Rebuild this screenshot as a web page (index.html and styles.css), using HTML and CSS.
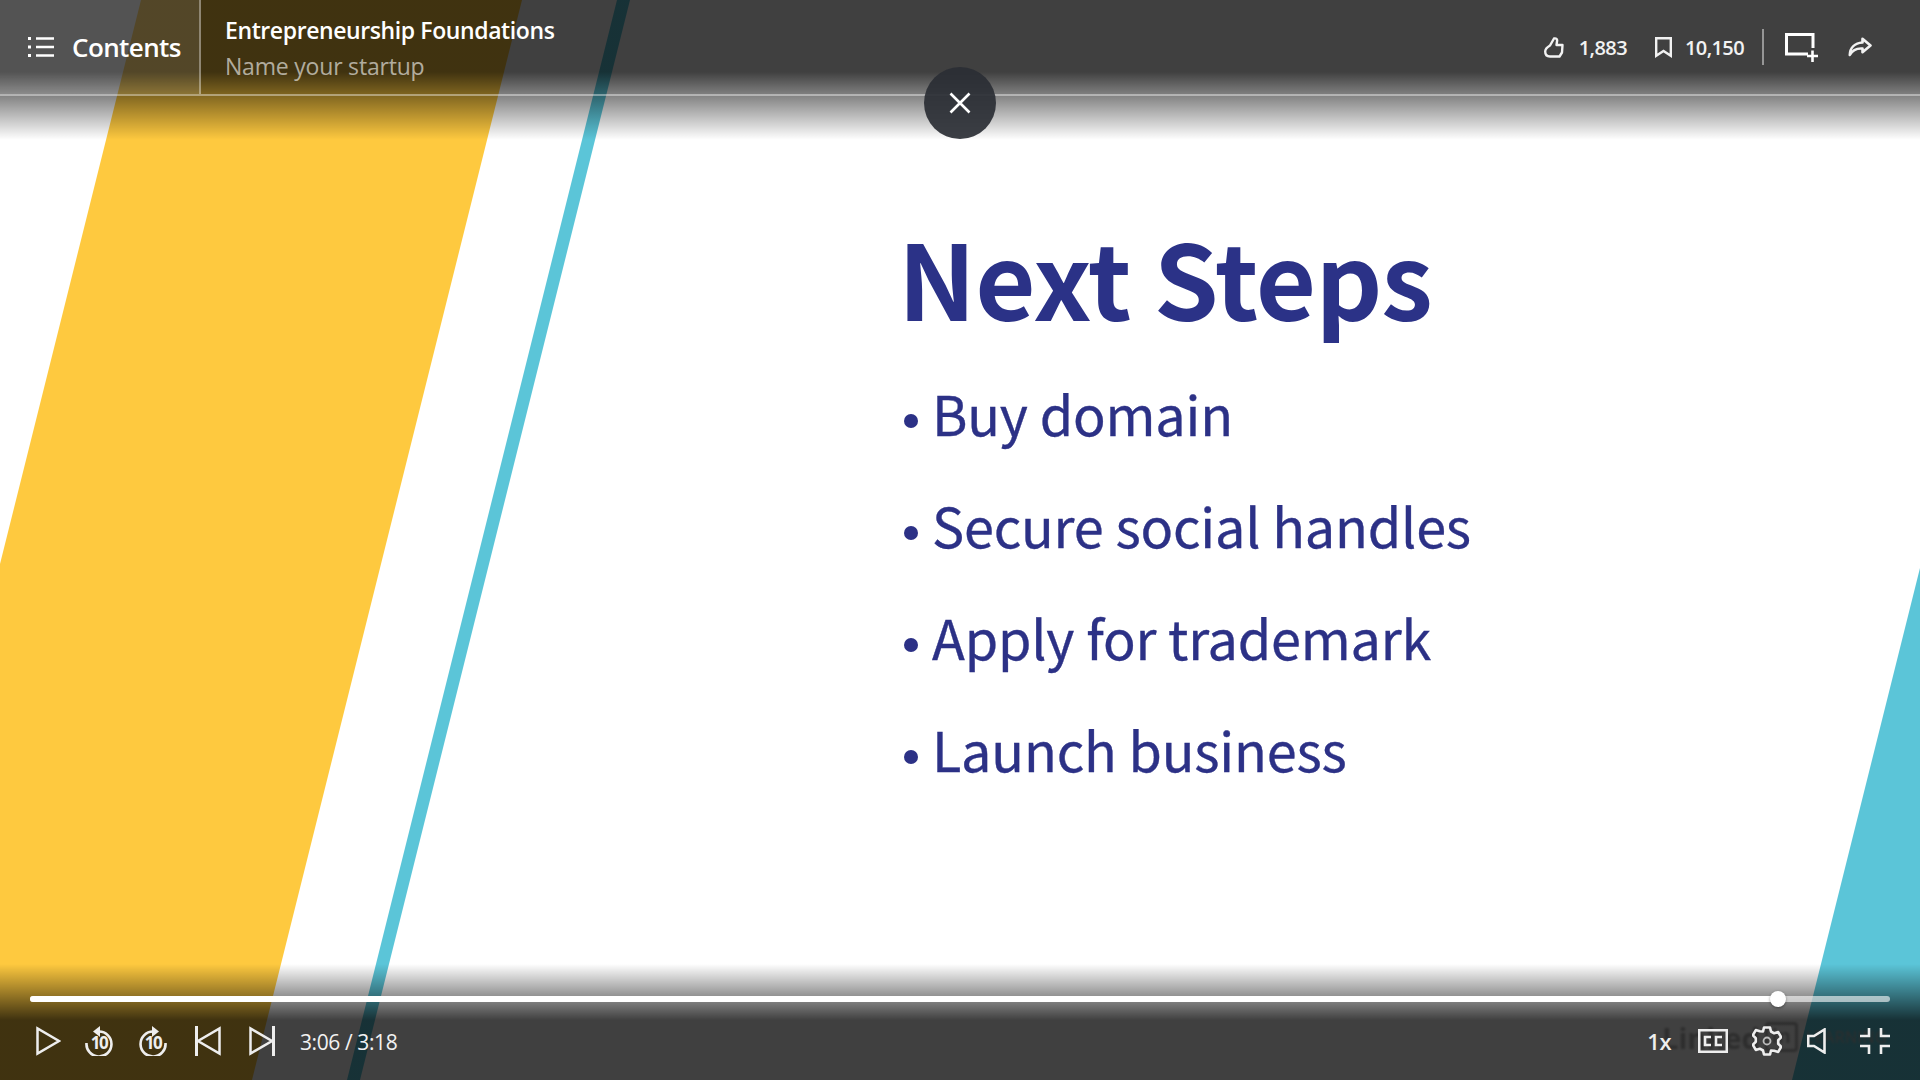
FILE: index.html
```html
<!DOCTYPE html>
<html lang="en">
<head>
<meta charset="utf-8">
<title>Entrepreneurship Foundations - Name your startup</title>
<link rel="stylesheet" href="styles.css">
</head>
<body>
<main class="player">
  <svg class="slide-art" viewBox="0 0 1920 1080" aria-hidden="true">
    <polygon class="art-yellow" points="141,0 522,0 252,1080 -129,1080"/>
    <polygon class="art-blue" points="617,0 630,0 360,1080 347,1080"/>
    <polygon class="art-blue" points="1920,568 1920,1080 1792,1080"/>
  </svg>

  <section class="slide">
    <h1 class="slide-title">Next Steps</h1>
    <ul class="slide-list">
      <li>Buy domain</li>
      <li>Secure social handles</li>
      <li>Apply for trademark</li>
      <li>Launch business</li>
    </ul>
  </section>

  <div class="watermark"><span>Linked</span><span class="wm-in">in</span><span class="wm-learning">LEARNING</span></div>

  <header class="topbar">
    <div class="contents">
      <svg class="ico-list" width="26" height="22" viewBox="0 0 26 22"><g fill="none" stroke="#fff" stroke-width="2.4"><path d="M8 2.500h18M8 11h18M8 19.500h18"/></g><g fill="#fff"><rect x="0" y="1" width="3" height="3"/><rect x="0" y="9.500" width="3" height="3"/><rect x="0" y="18" width="3" height="3"/></g></svg>
      <span class="contents-label">Contents</span>
    </div>
    <div class="titles">
      <div class="course">Entrepreneurship Foundations</div>
      <div class="lesson">Name your startup</div>
    </div>
    <div class="stats">
      <svg width="20" height="21" viewBox="0 0 20 21"><path d="M6 8.500 10 1.500c2.500-.5 3.500 1 3 3L12.500 8H18.500L18 15.500 15.500 19.500H6C3 19.500 1.200 17.500 1.200 14.500 1.200 11.500 3.500 10 6 8.500Z" fill="none" stroke="#f2f2f2" stroke-width="2.400" stroke-linejoin="round"/></svg>
      <span class="stat-num stat-likes">1,883</span>
      <svg class="ico-bookmark" width="17" height="21" viewBox="0 0 17 21"><path d="M1.200 1.200h14.600v17.600L8.500 14 1.200 18.800Z" fill="none" stroke="#f2f2f2" stroke-width="2.400"/></svg>
      <span class="stat-num stat-saves">10,150</span>
      <span class="divider"></span>
      <svg class="ico-add" width="33" height="29" viewBox="0 0 33 29"><path d="M23 21H1.500V1.500H28V15" fill="none" stroke="#fff" stroke-width="3"/><path d="M22 23H33M27.500 17.500V29" stroke="#fff" stroke-width="2.600"/></svg>
      <svg class="ico-share" width="24" height="20" viewBox="0 0 24 20"><path d="M14.500 1.800 22.500 8.500 14.500 15.200V11.500C8 11 4.500 13 1.800 18 2 10.500 7 6 14.500 5.500Z" fill="none" stroke="#f2f2f2" stroke-width="2.600" stroke-linejoin="round"/></svg>
    </div>
  </header>

  <button class="close" aria-label="Close"><svg width="22" height="22" viewBox="0 0 22 22"><path d="M1.500 1.500 20.500 20.500M20.500 1.500 1.500 20.500" stroke="#fff" stroke-width="2.600"/></svg></button>

  <footer class="bottombar">
    <div class="progress"><div class="progress-fill" style="width:1748px"></div><span class="progress-thumb"></span></div>
    <div class="controls">
      <svg width="25" height="30" viewBox="0 0 25 30"><path d="M1.500 2.500V27.500L23 15Z" fill="none" stroke="#eee" stroke-width="2.500"/></svg>
      <svg class="c-rew" width="28" height="30" viewBox="0 0 28 30"><path d="M14 5.500A12.500 12.500 0 1 1 1.500 17" fill="none" stroke="#eee" stroke-width="2.600"/><path d="M15 0V11L8 5.500Z" fill="#eee"/><text x="14" y="23" class="skip-num">10</text></svg>
      <svg class="c-fwd" width="28" height="30" viewBox="0 0 28 30"><path d="M14 5.500A12.500 12.500 0 1 0 26.500 17" fill="none" stroke="#eee" stroke-width="2.600"/><path d="M13 0V11L20 5.500Z" fill="#eee"/><text x="14" y="23" class="skip-num">10</text></svg>
      <svg class="c-prev" width="26" height="30" viewBox="0 0 26 30"><path d="M1.500 0V30" stroke="#eee" stroke-width="3"/><path d="M24.500 2.500V27.500L3 15Z" fill="none" stroke="#eee" stroke-width="2.500"/></svg>
      <svg class="c-next" width="26" height="30" viewBox="0 0 26 30"><path d="M24.500 0V30" stroke="#eee" stroke-width="3"/><path d="M1.500 2.500V27.500L23 15Z" fill="none" stroke="#eee" stroke-width="2.500"/></svg>
      <span class="time">3:06 / 3:18</span>
      <span class="speed">1x</span>
      <svg class="c-cc" width="30" height="24" viewBox="0 0 30 24"><rect x="1.250" y="1.250" width="27.500" height="21.500" fill="none" stroke="#eee" stroke-width="2.500"/><path d="M13 8H7v8h6M24 8h-6v8h6" fill="none" stroke="#eee" stroke-width="2.600"/></svg>
      <svg class="c-gear" width="30" height="30" viewBox="0 0 30 30"><path d="M12 1.500h6l1 4 3.200 1.800 4-1.200 3 5.200-3 2.900v3.600l3 2.900-3 5.200-4-1.200L19 24.500l-1 4h-6l-1-4-3.200-1.800-4 1.200-3-5.200 3-2.900v-3.600l-3-2.900 3-5.200 4 1.200L11 5.500Z" fill="none" stroke="#eee" stroke-width="2.600" stroke-linejoin="round"/><circle cx="15" cy="15" r="3.500" fill="none" stroke="#bbb" stroke-width="1.800"/></svg>
      <svg class="c-vol" width="19" height="26" viewBox="0 0 19 26"><path d="M17.500 1.500V24.500L7 18H1.200V8H7Z" fill="none" stroke="#eee" stroke-width="2.600"/></svg>
      <svg class="c-exit" width="30" height="26" viewBox="0 0 30 26"><path d="M0 8H9V0M21 0V8H30M0 18H9V26M21 26V18H30" fill="none" stroke="#eee" stroke-width="2.600"/></svg>
    </div>
  </footer>
</main>
</body>
</html>
```
FILE: styles.css
```css
* { box-sizing: border-box; }
html, body { margin: 0; padding: 0; }
body { width: 1920px; height: 1080px; overflow: hidden; background: #fff; font-family: "Open Sans", "Noto Sans", sans-serif; color: #fff; }
.player { position: relative; width: 1920px; height: 1080px; overflow: hidden; background: #fff; }

.slide-art { position: absolute; inset: 0; width: 1920px; height: 1080px; }
.art-yellow { fill: #fec93f; }
.art-blue { fill: #5bc5d8; }

.slide { position: relative; padding: 206px 0 0 898px; color: #2c3186; font-family: "Noto Sans CJK SC", "Noto Sans", sans-serif; }
.slide-title { margin: 0; font-size: 104px; line-height: 140px; font-weight: 700; color: #2b3287; letter-spacing: -.7px; }
.slide-list { margin: 11px 0 0 2px; padding: 0; list-style: none; }
.slide-list li { position: relative; height: 112px; padding-left: 32px; font-size: 54px; line-height: 112px; font-weight: 400; letter-spacing: -.2px; -webkit-text-stroke: .35px #2c3186; }
.slide-list li::before { content: ""; position: absolute; left: 4px; top: 57px; width: 14px; height: 14px; border-radius: 50%; background: #2c3186; }

.watermark { position: absolute; left: 1662px; top: 1021px; display: flex; align-items: center; height: 32px; font: 700 29px "Open Sans", sans-serif; color: #b4b4b4; filter: blur(1px); }
.wm-in { margin-left: 5px; width: 33px; height: 30px; border: 3px solid #b4b4b4; border-radius: 4px; font-size: 20px; line-height: 22px; text-align: center; }
.wm-learning { margin-left: 8px; font-size: 16px; font-weight: 400; letter-spacing: .5px; }

.topbar { position: absolute; left: 0; top: 0; width: 100%; height: 140px; display: flex; align-items: flex-start; background: linear-gradient(to bottom, rgba(0,0,0,.75) 0, rgba(0,0,0,.75) 72px, rgba(0,0,0,0) 140px); }
.topbar::after { content: ""; position: absolute; left: 0; top: 94px; width: 100%; height: 2px; background: rgba(255,255,255,.4); }
.contents { display: flex; align-items: center; width: 201px; height: 94px; padding-left: 28px; border-right: 2px solid rgba(255,255,255,.35); background: rgba(255,255,255,.1); }
.contents-label { margin-left: 18px; font-size: 26px; font-weight: 600; letter-spacing: -.6px; }
.titles { padding: 15px 0 0 24px; }
.course { font-size: 23px; line-height: 30px; font-weight: 600; letter-spacing: -.4px; }
.lesson { margin-top: 6px; font-size: 23px; line-height: 30px; color: rgba(255,255,255,.6); letter-spacing: -.2px; }
.stats { display: flex; align-items: center; margin-left: auto; height: 94px; padding-right: 48px; }
.stat-num { margin-left: 15px; font-size: 20px; font-weight: 600; letter-spacing: -.6px; color: #f2f2f2; }
.stat-likes { margin-left: 15px; margin-right: 28px; }
.stat-saves { margin-left: 13px; }
.divider { width: 2px; height: 36px; margin: 0 21px 0 18px; background: rgba(255,255,255,.45); }
.ico-share { margin-left: 30px; }

.close { position: absolute; left: 924px; top: 67px; width: 72px; height: 72px; padding: 0; border: 0; border-radius: 50%; display: flex; align-items: center; justify-content: center; background: rgba(42,46,52,.92); }

.bottombar { position: absolute; left: 0; bottom: 0; width: 100%; height: 116px; padding: 32px 30px 0; background: linear-gradient(to bottom, rgba(0,0,0,0) 0, rgba(0,0,0,.75) 56px, rgba(0,0,0,.75) 100%); }
.progress { position: relative; height: 6px; border-radius: 3px; background: rgba(255,255,255,.6); }
.progress-fill { height: 6px; border-radius: 3px; background: #fff; }
.progress-thumb { position: absolute; left: 1740px; top: -5px; width: 16px; height: 16px; border-radius: 50%; background: #fff; box-shadow: 0 1px 3px rgba(0,0,0,.4); }
.controls { display: flex; align-items: center; height: 30px; margin-top: 24px; padding-left: 6px; }
.c-rew { margin-left: 24px; }
.c-fwd { margin-left: 26px; }
.c-prev { margin-left: 28px; }
.c-next { margin-left: 28px; }
.time { margin-left: 25px; padding-top: 2px; font-size: 21px; letter-spacing: -.4px; color: #f2f2f2; }
.speed { margin-left: auto; font-size: 22px; font-weight: 600; letter-spacing: -.5px; color: #eee; }
.c-cc { margin-left: 27px; }
.c-gear { margin-left: 24px; }
.c-vol { margin-left: 25px; }
.c-exit { margin-left: 34px; }
.skip-num { font: 700 17px "Open Sans", sans-serif; fill: #eee; text-anchor: middle; letter-spacing: -1.500px; }
```
